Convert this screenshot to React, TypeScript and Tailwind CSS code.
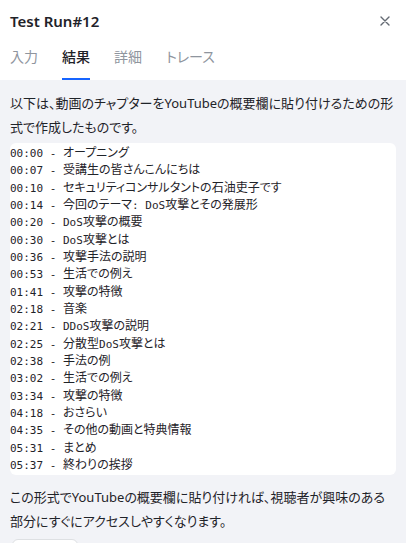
import React, { useState } from 'react';

const chapters: [string, string][] = [
  ['00:00', 'オープニング'],
  ['00:07', '受講生の皆さんこんにちは'],
  ['00:10', 'セキュリティコンサルタントの石油吏子です'],
  ['00:14', '今回のテーマ: DoS攻撃とその発展形'],
  ['00:20', 'DoS攻撃の概要'],
  ['00:30', 'DoS攻撃とは'],
  ['00:36', '攻撃手法の説明'],
  ['00:53', '生活での例え'],
  ['01:41', '攻撃の特徴'],
  ['02:18', '音楽'],
  ['02:21', 'DDoS攻撃の説明'],
  ['02:25', '分散型DoS攻撃とは'],
  ['02:38', '手法の例'],
  ['03:02', '生活での例え'],
  ['03:34', '攻撃の特徴'],
  ['04:18', 'おさらい'],
  ['04:35', 'その他の動画と特典情報'],
  ['05:31', 'まとめ'],
  ['05:37', '終わりの挨拶'],
];

const tabs = ['入力', '結果', '詳細', 'トレース'];

// ascii runs in mono, the rest in the CJK face
function MixedText({ text }: { text: string }) {
  const parts = text.split(/([\x00-\x7F]+)/).filter(Boolean);
  return (
    <>
      {parts.map((p, i) =>
        /^[\x00-\x7F]+$/.test(p) ? (
          <span key={i} className="text-[11px] whitespace-pre">{p}</span>
        ) : (
          <span key={i} className="text-[12px] font-['Noto_Sans_CJK_JP',sans-serif]">{p}</span>
        )
      )}
    </>
  );
}

export default function App() {
  const [active, setActive] = useState(1);

  return (
    <div className="w-[406px] h-[543px] overflow-hidden bg-white font-['Noto_Sans','Noto_Sans_CJK_JP',sans-serif] text-[#1f2329] [font-feature-settings:'palt']">
      {/* Header */}
      <div className="bg-white">
        <div className="flex items-center justify-between px-[10px] h-[42px]">
          <h1 className="text-[15px] font-semibold leading-none">Test Run#12</h1>
          <button className="text-[#646a73] mr-[6px]">
            <svg width="10" height="10" viewBox="0 0 10 10" fill="none" stroke="currentColor" strokeWidth="1.4" strokeLinecap="round">
              <path d="M1 1l8 8M9 1l-8 8" />
            </svg>
          </button>
        </div>
        <div className="flex items-start gap-[24px] px-[10px] h-[38px]">
          {tabs.map((t, i) => (
            <div
              key={t}
              onClick={() => setActive(i)}
              className={
                'relative h-full cursor-pointer text-[14px] leading-[14px] pt-[8px] ' +
                (i === active ? 'text-[#1f2329] font-medium' : 'text-[#8f959e]')
              }
            >
              {t}
              {i === active && (
                <span className="absolute left-0 right-0 bottom-0 h-[2px] bg-[#1664ff]" />
              )}
            </div>
          ))}
        </div>
      </div>

      {/* Content */}
      <div className="bg-[#f2f3f7] h-full pt-[11px] px-[10px]">
        <p className="text-[13px] leading-[24px]">
          以下は、動画のチャプターをYouTubeの概要欄に貼り付けるための形式で作成したものです。
        </p>

        <div className="mt-[4px] bg-white rounded-[6px] pt-[0px] pb-[3px] font-['DejaVu_Sans_Mono',monospace]">
          {chapters.map(([time, title]) => (
            <div key={time} className="leading-[17.33px] h-[17.33px] whitespace-nowrap">
              <span className="text-[11px] whitespace-pre">{time} - </span>
              <MixedText text={title} />
            </div>
          ))}
        </div>

        <p className="mt-[10px] text-[13px] leading-[24px]">
          この形式でYouTubeの概要欄に貼り付ければ、視聴者が興味のある部分にすぐにアクセスしやすくなります。
        </p>

        <div className="mt-[6px] ml-[2px] w-[66px] h-[30px] rounded-[6px] border border-[#dee0e3] bg-white" />
      </div>
    </div>
  );
}
